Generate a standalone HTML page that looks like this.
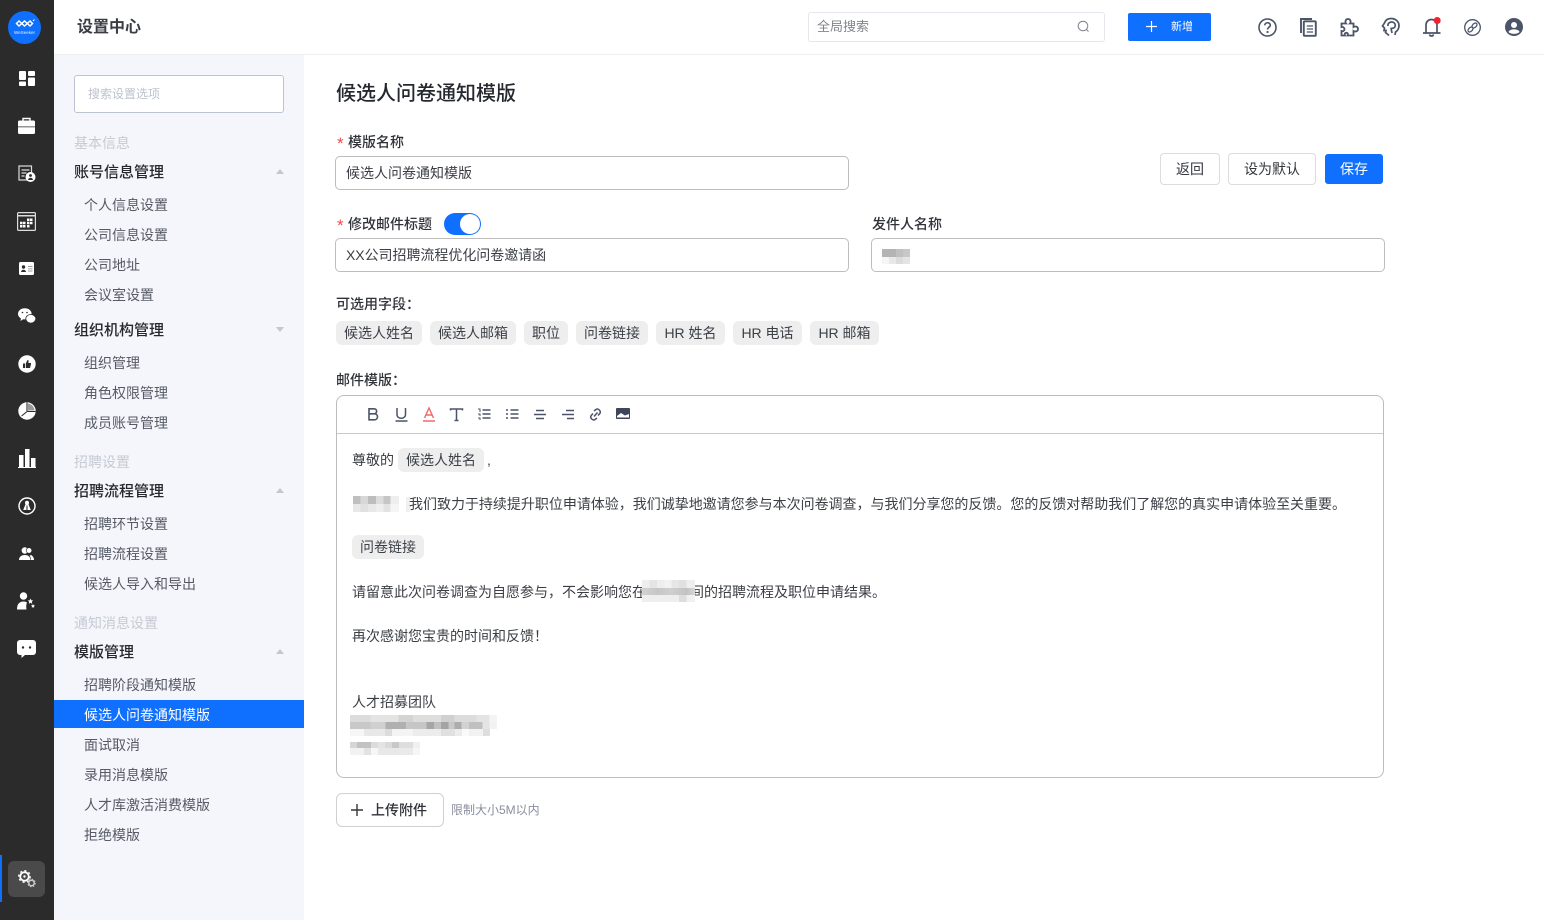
<!DOCTYPE html>
<html lang="zh-CN"><head><meta charset="utf-8"><title>候选人问卷通知模版</title>
<style>
*{box-sizing:border-box;margin:0;padding:0}
html,body{width:1544px;height:920px;overflow:hidden;background:#fff;font-family:"Liberation Sans","Noto Sans CJK SC",sans-serif;color:#2b2f36;font-size:14px}
.a{position:absolute;white-space:nowrap}
#rail{position:absolute;left:0;top:0;width:54px;height:920px;background:#2b2b2b}
#side{position:absolute;left:54px;top:55px;width:250px;height:865px;background:#f5f6fb}
#top{position:absolute;left:54px;top:0;width:1490px;height:55px;background:#fff;border-bottom:1px solid #eeeff3}
.t{position:absolute;white-space:nowrap;line-height:20px;height:20px}
.g{color:#c6cad3;font-size:14px;left:74px}
.h{font-size:15px;font-weight:500;color:#25282e;left:74px}
.i{font-size:14px;color:#555a64;left:84px}
.ar{position:absolute;left:276px;width:0;height:0;border-left:4.5px solid transparent;border-right:4.5px solid transparent}
.up{border-bottom:5px solid #c3c7d0}.dn{border-top:5px solid #c3c7d0}
.box{position:absolute;background:#fff;border:1px solid #bdbdbd;border-radius:5px}
.tag{position:absolute;height:24px;line-height:25px;background:#eeeeee;border-radius:6px;font-size:14px;color:#3b3f46;text-align:center;white-space:nowrap}
.btn{position:absolute;height:32px;line-height:31px;border:1px solid #dcdcdc;border-radius:4px;text-align:center;font-size:14px;color:#33363c;background:#fff}
.c{font-size:14px;color:#3b3e44}
.l{font-size:14px;color:#2f3238;font-weight:500}
.red{color:#f5494d;font-size:17px;font-weight:400;position:absolute;line-height:20px;height:20px}
svg{position:absolute;overflow:visible}
.m{position:absolute}
</style></head><body>

<div id="rail">
<svg style="left:8px;top:11px" width="33" height="33" viewBox="0 0 33 33"><circle cx="16.5" cy="16.5" r="16.5" fill="#0f6fff"/><path d="M8.500 12.500 11 10l2.800 2.500L16.500 15l2.800-2.500L22 10l2.500 2.500L22 15l-2.700-2.500L16.500 10l-2.700 2.500L11 15z" fill="none" stroke="#fff" stroke-width="1.500"/><path d="m25 10 1.500-1.500" stroke="#fff" stroke-width="1"/><text x="16.500" y="23" text-anchor="middle" font-size="4.500" fill="#e6f0ff">WeSeeker</text></svg>
<svg style="left:19px;top:71px" width="16" height="15" viewBox="0 0 16 15" fill="#fff"><rect width="7" height="9" rx="1"/><rect x="9" width="7" height="5" rx="1"/><rect y="10.500" width="7" height="4.500" rx="1"/><rect x="9" y="6.500" width="7" height="8.500" rx="1"/></svg>
<svg style="left:18px;top:117px" width="17" height="17" viewBox="0 0 17 17" fill="#fff"><path d="M5 4V1.500h7V4" fill="none" stroke="#fff" stroke-width="1.400"/><path d="M1.500 3.500h14a1.500 1.500 0 0 1 1.500 1.500v4.500H0V5a1.500 1.500 0 0 1 1.500-1.500zM0 10.300h17v5.200a1.500 1.500 0 0 1-1.500 1.500h-14A1.500 1.500 0 0 1 0 15.500z"/></svg>
<svg style="left:18px;top:165px" width="18" height="17" viewBox="0 0 18 17"><rect x="1" y="1" width="12.500" height="14" fill="none" stroke="#ddd" stroke-width="1.200"/><path d="M3.500 5h8M3.500 8h5M3.500 11h3" stroke="#ddd" stroke-width="1.200"/><circle cx="12.500" cy="12" r="5" fill="#fff"/><circle cx="12.500" cy="10.500" r="1.400" fill="#2b2b2b"/><path d="M10 15c.3-3 4.700-3 5 0z" fill="#2b2b2b"/></svg>
<svg style="left:17px;top:212px" width="19" height="19" viewBox="0 0 19 19"><rect x=".6" y=".6" width="17.800" height="17.800" rx="1" fill="none" stroke="#ddd" stroke-width="1.200"/><rect x="1" y="3" width="17" height="1.500" fill="#ddd"/><path d="M10 6.500h2.500V9H10zM13 6.500h2.500V9H13zM3 9.800h2.500v2.500H3zM6 9.800h2.500v2.500H6zM10 9.800h2.500v2.500H10zM13 9.800h2.500v2.500H13zM3 13h2.500v2.500H3zM6 13h2.500v2.500H6zM10 13h2.500v2.500H10z" fill="#fff"/></svg>
<svg style="left:19px;top:262px" width="15" height="13" viewBox="0 0 15 13"><rect width="15" height="13" rx="1.500" fill="#fff"/><circle cx="4.500" cy="5" r="1.700" fill="#2b2b2b"/><path d="M2 10c.3-3 4.700-3 5 0z" fill="#2b2b2b"/><path d="M9 4.500h4.500M9 6.800h4.500M9 9h4.500" stroke="#999" stroke-width=".9"/></svg>
<svg style="left:18px;top:308px" width="18" height="16" viewBox="0 0 18 16" fill="#fff"><ellipse cx="6.800" cy="5.800" rx="6.800" ry="5.600"/><path d="M3 10l-.5 3 3-2z"/><circle cx="4.500" cy="4.500" r=".8" fill="#2b2b2b"/><circle cx="9" cy="4.500" r=".8" fill="#2b2b2b"/><ellipse cx="12.800" cy="10.800" rx="5" ry="4.300" stroke="#2b2b2b" stroke-width=".8"/></svg>
<svg style="left:18px;top:355px" width="18" height="18" viewBox="0 0 18 18"><circle cx="9" cy="9" r="8.700" fill="#fff"/><path d="M5 8.500h2V13H5zM7.800 8.500 9.500 5c1 0 1.300.8 1.100 1.500l-.3 1.500H13v1l-1 4H7.800z" fill="#2b2b2b"/></svg>
<svg style="left:18px;top:402px" width="18" height="18" viewBox="0 0 18 18"><circle cx="9" cy="9" r="8.700" fill="#fff"/><path d="M10 1.500 A7.500 7.500 0 0 1 16.500 8.500 H10z" fill="#9a9a9a"/><path d="M9 9.500 3.600 14" stroke="#2b2b2b" stroke-width="1.100"/><path d="M9 9V.5M9 9.500h8.500" stroke="#2b2b2b" stroke-width="1.100"/></svg>
<svg style="left:18px;top:449px" width="18" height="19" viewBox="0 0 18 19" fill="#fff"><rect x="1" y="6" width="4.500" height="12"/><rect x="7" y="0" width="4.500" height="18"/><rect x="13" y="9" width="4.500" height="9"/><rect x="0" y="18" width="18" height="1"/></svg>
<svg style="left:18px;top:497px" width="18" height="18" viewBox="0 0 18 18"><circle cx="9" cy="9" r="8" fill="none" stroke="#fff" stroke-width="1.400"/><path d="M9 3.500 12.800 13H5.200z" fill="#fff"/><circle cx="9" cy="5.800" r="2" fill="#fff"/><path d="M9 8.500v4.500" stroke="#2b2b2b"/></svg>
<svg style="left:19px;top:547px" width="15" height="13" viewBox="0 0 15 13" fill="#fff"><circle cx="5.800" cy="3.500" r="3.200"/><path d="M0 13c0-3.500 2.800-5 5.800-5s5.500 1.500 5.700 5z"/><circle cx="10" cy="3.500" r="2.800" stroke="#2b2b2b" stroke-width=".6"/><path d="M12 13h3c0-2.500-1.200-4-3-5l-1.500.8c1 1 1.500 2.500 1.500 4.200z"/></svg>
<svg style="left:17px;top:592px" width="19" height="18" viewBox="0 0 19 18" fill="#fff"><circle cx="6.500" cy="4" r="3.700"/><path d="M0 17.500c0-5.500 2.500-8 6.500-8 2 0 3 .5 3.500 1.200-1 1.500-.8 5-.5 6.800z"/><path d="m13.500 6.500.8 1.800 1.900.2-1.400 1.300.4 1.900-1.700-1-1.700 1 .4-1.900-1.400-1.300 1.900-.2zM16 12l.6 1.200 1.400.2-1 1 .2 1.300-1.200-.6-1.200.6.200-1.300-1-1 1.400-.2z"/></svg>
<svg style="left:17px;top:640px" width="19" height="18" viewBox="0 0 19 18"><path d="M3 0h13a3 3 0 0 1 3 3v9a3 3 0 0 1-3 3H8l-3.500 3v-3H3a3 3 0 0 1-3-3V3a3 3 0 0 1 3-3z" fill="#fff"/><circle cx="6" cy="7.500" r="1.200" fill="#2b2b2b"/><circle cx="13" cy="7.500" r="1.200" fill="#2b2b2b"/></svg>
<div class="m" style="left:0;top:855px;width:2px;height:47px;background:#0f6fff"></div>
<div class="m" style="left:8px;top:861px;width:37px;height:36px;border-radius:6px;background:#4a4a4a"></div>
<svg style="left:18px;top:870px" width="18" height="18" viewBox="0 0 18 18"><circle cx="6.500" cy="6.500" r="4.300" fill="none" stroke="#fff" stroke-width="1.800"/><circle cx="6.500" cy="6.500" r="5.800" fill="none" stroke="#fff" stroke-width="1.300" stroke-dasharray="2 2.500"/><circle cx="6.500" cy="6.500" r="1.200" fill="#fff"/><circle cx="13.500" cy="13" r="2.700" fill="none" stroke="#ccc" stroke-width="1.500"/><circle cx="13.500" cy="13" r="3.800" fill="none" stroke="#ccc" stroke-width="1" stroke-dasharray="1.500 1.500"/></svg>
</div>

<div id="top"></div>
<div id="side"></div>
<div class="t" style="left:77px;top:18px;font-size:16px;font-weight:700;color:#3a3d44">设置中心</div>
<div class="box" style="left:808px;top:12px;width:297px;height:30px;border:1px solid #e6e7ec;border-radius:3px"></div>
<div class="t" style="left:817px;top:17px;font-size:13px;color:#80848c">全局搜索</div>
<svg style="left:1077px;top:20px" width="13" height="13" viewBox="0 0 13 13" fill="none" stroke="#7d8188" stroke-width="1"><circle cx="6" cy="6" r="4.800"/><path d="m9.500 9.500 2 2"/></svg>
<div class="m" style="left:1128px;top:13px;width:83px;height:28px;background:#0f70ff;border-radius:2px"></div>
<svg style="left:1146px;top:21px" width="11" height="11" viewBox="0 0 11 11" stroke="#fff" stroke-width="1.200"><path d="M5.500 0v11M0 5.500h11"/></svg>
<div class="t" style="left:1171px;top:17px;font-size:11px;color:#fff">新增</div>

<svg style="left:1258px;top:18px" width="19" height="19" viewBox="0 0 19 19" fill="none" stroke="#4b5468" stroke-width="1.600"><circle cx="9.500" cy="9.500" r="8.500"/><path d="M6.800 7.300c.1-3.400 5.500-3.400 5.500-.1 0 2-2.800 2.200-2.800 4.300"/><circle cx="9.500" cy="14" r=".5" fill="#4b5468" stroke-width="1.200"/></svg>
<svg style="left:1300px;top:18px" width="17" height="19" viewBox="0 0 17 19" fill="none" stroke="#4b5468" stroke-width="1.900"><path d="M1 15V1h11"/><rect x="3.800" y="3.300" width="12" height="14.500" rx=".8"/><path d="M6.800 8h6.200M6.800 11h6.200M6.800 14h6.200" stroke-width="1.300"/></svg>
<svg style="left:1340px;top:18px" width="19" height="19" viewBox="0 0 19 19" fill="none" stroke="#4b5468" stroke-width="1.800"><path d="M1.500 5.500H6c-.8-1-1-4.500 2-4.500s3 3.500 2 4.500h3.500V9c1.500-1 4.500-.6 4.500 2s-3 3-4.500 2v4.500H7.500c.8-1.500.3-2.700-1.200-2.700s-2 1.200-1.300 2.700H1.500v-4.500c1.500.5 3-.2 3-1.700S3 8.500 1.500 9z"/></svg>
<svg style="left:1381px;top:17px" width="19" height="20" viewBox="0 0 19 20" fill="none" stroke="#4b5468" stroke-width="1.700"><path d="M8 18.500 4.500 15.500 5 13.500H3l.5-2.500L1.500 9 3.500 6C4.500 3 7 1.500 10 1.500c4.500 0 8 3 8 7 0 3-1.500 5.200-3.500 6.500l-.5 3"/><path d="M7 9C6.500 6.500 8.500 5 10.500 5s3.800 1.300 3.800 3.300-1.500 3-3 3H9.500M10 11l1 5"/></svg>
<svg style="left:1422px;top:17px" width="20" height="20" viewBox="0 0 20 20" fill="none" stroke="#4b5468" stroke-width="1.700"><path d="M4 15.500V8c0-3 2-5.500 5.500-5.500S15 5 15 8v7.500M1 16h17.500"/><path d="M7.500 17.500c.5 2 3.500 2 4 0" /><circle cx="15.200" cy="3.500" r="3.500" fill="#f5222d" stroke="none"/></svg>
<svg style="left:1464px;top:19px" width="17" height="17" viewBox="0 0 17 17" fill="none" stroke="#4b5468"><circle cx="8.500" cy="8.500" r="7.800" stroke-width="1.300"/><ellipse cx="6.500" cy="10.500" rx="1.900" ry="2.900" transform="rotate(45 6.500 10.500)" stroke-width="1.300"/><ellipse cx="10.500" cy="6.500" rx="1.900" ry="2.900" transform="rotate(45 10.500 6.500)" stroke-width="1.300"/></svg>
<svg style="left:1505px;top:18px" width="18" height="18" viewBox="0 0 18 18"><circle cx="9" cy="9" r="9" fill="#4b5468"/><circle cx="9" cy="7" r="3" fill="#fff"/><path d="M3.500 14c1-3.500 10-3.500 11 0-2.500 2.500-8.500 2.500-11 0z" fill="#fff"/></svg>

<div class="box" style="left:74px;top:75px;width:210px;height:38px;border:1px solid #bcc4d2;border-radius:3px"></div>
<div class="t" style="left:88px;top:84px;font-size:12px;color:#bdc2cc">搜索设置选项</div>

<div class="t g" style="top:133px">基本信息</div>
<div class="t h" style="top:163px">账号信息管理</div><div class="ar up" style="top:169px"></div>
<div class="t i" style="top:195px">个人信息设置</div>
<div class="t i" style="top:225px">公司信息设置</div>
<div class="t i" style="top:255px">公司地址</div>
<div class="t i" style="top:285px">会议室设置</div>
<div class="t h" style="top:321px">组织机构管理</div><div class="ar dn" style="top:327px"></div>
<div class="t i" style="top:353px">组织管理</div>
<div class="t i" style="top:383px">角色权限管理</div>
<div class="t i" style="top:413px">成员账号管理</div>
<div class="t g" style="top:452px">招聘设置</div>
<div class="t h" style="top:482px">招聘流程管理</div><div class="ar up" style="top:488px"></div>
<div class="t i" style="top:514px">招聘环节设置</div>
<div class="t i" style="top:544px">招聘流程设置</div>
<div class="t i" style="top:574px">候选人导入和导出</div>
<div class="t g" style="top:613px">通知消息设置</div>
<div class="t h" style="top:643px">模版管理</div><div class="ar up" style="top:649px"></div>
<div class="t i" style="top:675px">招聘阶段通知模版</div>
<div class="m" style="left:54px;top:700px;width:250px;height:28px;background:#0f6fff"></div>
<div class="t i" style="top:705px;color:#fff">候选人问卷通知模版</div>
<div class="t i" style="top:735px">面试取消</div>
<div class="t i" style="top:765px">录用消息模版</div>
<div class="t i" style="top:795px">人才库激活消费模版</div>
<div class="t i" style="top:825px">拒绝模版</div>

<div class="t" style="left:336px;top:81px;height:26px;line-height:26px;font-size:20px;font-weight:500;color:#25282e">候选人问卷通知模版</div>

<div class="red" style="left:337px;top:134px">*</div>
<div class="t l" style="left:348px;top:132px">模版名称</div>
<div class="box" style="left:335px;top:156px;width:514px;height:34px"></div>
<div class="t c" style="left:346px;top:163px">候选人问卷通知模版</div>

<div class="btn" style="left:1160px;top:153px;width:60px">返回</div>
<div class="btn" style="left:1228px;top:153px;width:88px">设为默认</div>
<div class="btn" style="left:1325px;top:154px;width:58px;height:30px;line-height:29px;background:#0f6fff;border-color:#0f6fff;color:#fff;border-radius:3px">保存</div>

<div class="red" style="left:337px;top:216px">*</div>
<div class="t l" style="left:348px;top:214px">修改邮件标题</div>
<div class="m" style="left:444px;top:213px;width:37px;height:22px;border-radius:11px;background:#0f6fff"></div>
<div class="m" style="left:460px;top:214px;width:20px;height:20px;border-radius:50%;background:#fff"></div>
<div class="box" style="left:335px;top:238px;width:514px;height:34px"></div>
<div class="t c" style="left:346px;top:245px;letter-spacing:-.04px">XX公司招聘流程优化问卷邀请函</div>

<div class="t l" style="left:872px;top:214px">发件人名称</div>
<div class="box" style="left:871px;top:238px;width:514px;height:34px"></div>
<div class="m" style="left:882px;top:249px;width:28px;height:8px;background:linear-gradient(90deg,#b4b4b4 0 50%,#c0c0c0 50% 75%,#c8c8c8 75%)"></div>
<div class="m" style="left:882px;top:257px;width:28px;height:7px;background:linear-gradient(90deg,#f6f6f6 0 25%,#e8e8e8 25% 50%,#dcdcdc 50% 75%,#e4e4e4 75%)"></div>

<div class="t l" style="left:336px;top:294px">可选用字段：</div>
<div class="tag" style="left:336px;top:321px;width:86px">候选人姓名</div>
<div class="tag" style="left:430px;top:321px;width:86px">候选人邮箱</div>
<div class="tag" style="left:524px;top:321px;width:44px">职位</div>
<div class="tag" style="left:576px;top:321px;width:72px">问卷链接</div>
<div class="tag" style="left:656px;top:321px;width:69px">HR 姓名</div>
<div class="tag" style="left:733px;top:321px;width:69px">HR 电话</div>
<div class="tag" style="left:810px;top:321px;width:69px">HR 邮箱</div>

<div class="t l" style="left:336px;top:370px">邮件模版：</div>
<div class="box" style="left:336px;top:395px;width:1048px;height:383px;border-radius:8px"></div>
<div class="m" style="left:337px;top:433px;width:1046px;height:1px;background:#c8c8c8"></div>

<svg style="left:368px;top:408px" width="11" height="13" viewBox="0 0 11 13" fill="none" stroke="#4b5468" stroke-width="1.600"><path d="M1 .8h5c3.500 0 3.500 5 0 5H1zM1 5.800h5.500c4 0 4 6 0 6H1z"/></svg>
<svg style="left:395px;top:407px" width="13" height="15" viewBox="0 0 13 15" fill="none" stroke="#4b5468" stroke-width="1.500"><path d="M2 1v6.500c0 5 8.500 5 8.500 0V1M.5 14h12"/></svg>
<svg style="left:423px;top:407px" width="12" height="15" viewBox="0 0 12 15" fill="none"><path d="M1.500 11 6 1l4.500 10M3 8h6" stroke="#f0696b" stroke-width="1.400"/><path d="M0 14h12" stroke="#f0696b" stroke-width="1.500"/></svg>
<svg style="left:450px;top:408px" width="13" height="13" viewBox="0 0 13 13" fill="none" stroke="#4b5468" stroke-width="1.500"><path d="M.5 2.500V1h12v1.500M6.500 1v12M4.500 12.500h4"/></svg>
<svg style="left:478px;top:408px" width="13" height="12" viewBox="0 0 13 12" fill="none" stroke="#4b5468" stroke-width="1.400"><path d="M4.500 2h8M4.500 6h8M4.500 10h8"/><path d="M0 1h2v3M0 6h2v2M0 10h2v2" stroke-width="1"/></svg>
<svg style="left:506px;top:408px" width="13" height="12" viewBox="0 0 13 12" fill="none" stroke="#4b5468" stroke-width="1.400"><path d="M4.500 2h8M4.500 6h8M4.500 10h8M0 2h2M0 6h2M0 10h2"/></svg>
<svg style="left:534px;top:409px" width="12" height="11" viewBox="0 0 12 11" fill="none" stroke="#4b5468" stroke-width="1.400"><path d="M2 1.500h8M0 5.500h12M2 9.500h8"/></svg>
<svg style="left:562px;top:409px" width="12" height="11" viewBox="0 0 12 11" fill="none" stroke="#4b5468" stroke-width="1.400"><path d="M4 1.500h8M0 5.500h12M5 9.500h7"/></svg>
<svg style="left:589px;top:408px" width="13" height="13" viewBox="0 0 13 13" fill="none" stroke="#4b5468" stroke-width="1.500"><path d="m5 3 2-1.500c2-1.500 5.500 1.500 3.800 4L9 7.500M8 10l-2 1.500c-2 1.500-5.500-1.500-3.800-4L4 5.500M5 8.500 8.500 4.500"/></svg>
<svg style="left:616px;top:408px" width="14" height="12" viewBox="0 0 14 12"><rect width="14" height="11" rx="1" fill="#3e465a"/><path d="M1 8 5 5l4 2.500L13 6v3.500H1z" fill="#fff"/></svg>

<div class="t c" style="left:352px;top:450px">尊敬的</div>
<div class="tag" style="left:398px;top:448px;width:86px">候选人姓名</div>
<div class="t c" style="left:487px;top:450px">,</div>

<div class="m" style="left:353px;top:496px;width:46px;height:8px;background:linear-gradient(90deg,#bfbfbf 0 16%,#d8d8d8 16% 33%,#bdbdbd 33% 50%,#dcdcdc 50% 66%,#c6c6c6 66% 82%,#eee 82%)"></div>
<div class="m" style="left:353px;top:504px;width:46px;height:8px;background:linear-gradient(90deg,#e8e8e8 0 16%,#e0e0e0 16% 33%,#e8e8e8 33% 50%,#eee 50% 66%,#e2e2e2 66% 82%,#f5f5f5 82%)"></div>
<div class="m" style="left:406px;top:497px;width:4px;height:15px;background:#f0f0f0"></div>
<div class="t c" style="left:409px;top:494px;letter-spacing:-.015px">我们致力于持续提升职位申请体验，我们诚挚地邀请您参与本次问卷调查，与我们分享您的反馈。您的反馈对帮助我们了解您的真实申请体验至关重要。</div>

<div class="tag" style="left:352px;top:535px;width:72px">问卷链接</div>

<div class="t c" style="left:352px;top:582px">请留意此次问卷调查为自愿参与，不会影响您在</div>
<div class="t c" style="left:690px;top:582px">间的招聘流程及职位申请结果。</div>
<div class="m" style="left:642px;top:580px;width:53px;height:8px;background:linear-gradient(90deg,#eee 0 14%,#e4e4e4 14% 28%,#eee 28% 42%,#f2f2f2 42% 56%,#e6e6e6 56% 70%,#e0e0e0 70% 84%,#efefef 84%)"></div>
<div class="m" style="left:642px;top:588px;width:53px;height:7px;background:linear-gradient(90deg,#d2d2d2,#c6c6c6 30%,#cfcfcf 55%,#c2c2c2 85%,#d8d8d8)"></div>
<div class="m" style="left:642px;top:595px;width:53px;height:7px;background:linear-gradient(90deg,#eee 0 70%,#ddd 70% 84%,#f0f0f0 84%)"></div>

<div class="t c" style="left:352px;top:626px">再次感谢您宝贵的时间和反馈！</div>
<div class="t c" style="left:352px;top:692px">人才招募团队</div>

<div class="m" style="left:350px;top:715px;width:147px;height:7px;background:linear-gradient(90deg,#dcdcdc 0 14%,#e4e4e4 14% 33%,#d4d4d4 33% 43%,#dedede 43% 62%,#d0d0d0 62% 71%,#dcdcdc 71% 86%,#e4e4e4 86% 95%,#f4f4f4 95%)"></div>
<div class="m" style="left:350px;top:722px;width:147px;height:7px;background:linear-gradient(90deg,#c8c8c8 0 14%,#d0d0d0 14% 24%,#b0b0b0 24% 38%,#c6c6c6 38% 52%,#a6a6a6 52% 57%,#c0c0c0 57% 62%,#a4a4a4 62% 67%,#c8c8c8 67% 71%,#acacac 71% 76%,#d2d2d2 76% 81%,#c0c0c0 81% 90%,#e4e4e4 90% 95%,#f2f2f2 95%)"></div>
<div class="m" style="left:350px;top:729px;width:140px;height:7px;background:linear-gradient(90deg,#f6f6f6 0 10%,#e8e8e8 10% 25%,#dcdcdc 25% 30%,#f4f4f4 30% 45%,#ececec 45% 65%,#e0e0e0 65% 75%,#ececec 75% 80%,#fafafa 80% 85%,#f2f2f2 85% 95%,#dedede 95%)"></div>
<div class="m" style="left:350px;top:742px;width:70px;height:6px;background:linear-gradient(90deg,#d6d6d6 0 10%,#c2c2c2 10% 30%,#dcdcdc 30% 40%,#e4e4e4 40% 50%,#dadada 50% 60%,#c8c8c8 60% 70%,#dedede 70% 90%,#f0f0f0 90%)"></div>
<div class="m" style="left:350px;top:748px;width:70px;height:7px;background:linear-gradient(90deg,#f2f2f2 0 20%,#e2e2e2 20% 30%,#f6f6f6 30% 40%,#e8e8e8 40% 70%,#eaeaea 70% 90%,#f6f6f6 90%)"></div>

<div class="box" style="left:336px;top:793px;width:108px;height:34px;border:1px solid #d0d0d0;border-radius:6px"></div>
<svg style="left:351px;top:804px" width="12" height="12" viewBox="0 0 12 12" stroke="#33363c" stroke-width="1.400"><path d="M6 0v12M0 6h12"/></svg>
<div class="t" style="left:371px;top:800px;font-size:14px;font-weight:500;color:#2f3238">上传附件</div>
<div class="t" style="left:451px;top:800px;font-size:12px;color:#8a8d9e">限制大小5M以内</div>
</body></html>
